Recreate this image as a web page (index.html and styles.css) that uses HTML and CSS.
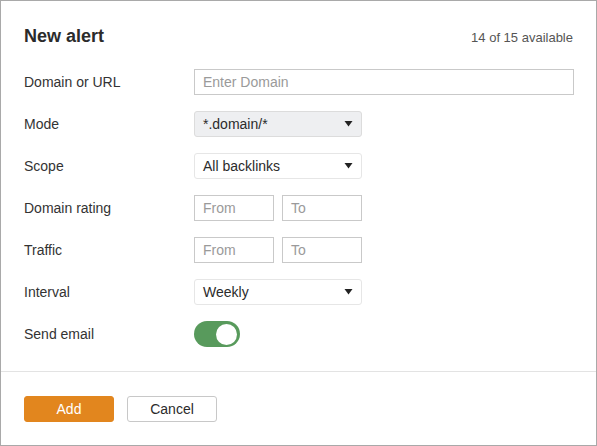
FILE: index.html
```html
<!DOCTYPE html>
<html>
<head>
<meta charset="utf-8">
<link rel="stylesheet" href="styles.css">
</head>
<body>
<div class="dialog">
  <div class="main">
    <div class="header">
      <h1 class="title">New alert</h1>
      <span class="count">14 of 15 available</span>
    </div>
    <div class="form">
      <div class="label">Domain or URL</div>
      <div class="field"><div class="input wide placeholder">Enter Domain</div></div>

      <div class="label">Mode</div>
      <div class="field"><div class="select filled"><span>*.domain/*</span><svg class="caret" width="9" height="6" viewBox="0 0 9 6"><polygon points="0.5,0 8.5,0 4.5,5.5" fill="#222"/></svg></div></div>

      <div class="label">Scope</div>
      <div class="field"><div class="select"><span>All backlinks</span><svg class="caret" width="9" height="6" viewBox="0 0 9 6"><polygon points="0.5,0 8.5,0 4.5,5.5" fill="#222"/></svg></div></div>

      <div class="label">Domain rating</div>
      <div class="field pair"><div class="input small placeholder">From</div><div class="input small placeholder">To</div></div>

      <div class="label">Traffic</div>
      <div class="field pair"><div class="input small placeholder">From</div><div class="input small placeholder">To</div></div>

      <div class="label">Interval</div>
      <div class="field"><div class="select"><span>Weekly</span><svg class="caret" width="9" height="6" viewBox="0 0 9 6"><polygon points="0.5,0 8.5,0 4.5,5.5" fill="#222"/></svg></div></div>

      <div class="label">Send email</div>
      <div class="field"><div class="toggle"><div class="knob"></div></div></div>
    </div>
  </div>
  <div class="footer">
    <button class="btn primary">Add</button>
    <button class="btn secondary">Cancel</button>
  </div>
</div>
</body>
</html>
```

FILE: styles.css
```css
* { box-sizing: border-box; }
html, body { margin: 0; padding: 0; background: #fff; }
body { font-family: "Liberation Sans", Arial, sans-serif; color: #333; }

.dialog {
  width: 597px;
  height: 446px;
  border: 1px solid #a9a9a9;
  display: flex;
  flex-direction: column;
}

.main {
  padding: 24px 23px 24px 23px;
  border-bottom: 1px solid #e3e3e3;
}

.header {
  display: flex;
  justify-content: space-between;
  align-items: baseline;
  height: 20px;
  padding-top: 1px;
}

.title {
  margin: 0;
  font-size: 18px;
  line-height: 20px;
  font-weight: bold;
  color: #2b2b2b;
}

.count {
  font-size: 13px;
  color: #555;
}

.form {
  margin-top: 24px;
  display: grid;
  grid-template-columns: 170px 1fr;
  grid-auto-rows: 26px;
  row-gap: 16px;
  align-items: center;
}

.label {
  font-size: 14px;
  color: #333;
  line-height: 26px;
}

.field { display: flex; align-items: center; height: 26px; }
.pair { gap: 8px; }

.input {
  height: 26px;
  border: 1px solid #c9c9c9;
  font-size: 14px;
  line-height: 24px;
  padding: 0 8px;
  background: #fff;
}
.input.wide { width: 380px; }
.input.small { width: 80px; }
.placeholder { color: #9a9a9a; }

.select {
  width: 168px;
  height: 26px;
  border: 1px solid #e6e6e6;
  border-radius: 3px;
  font-size: 14px;
  color: #2b2b2b;
  padding: 0 7px 0 8px;
  display: flex;
  align-items: center;
  justify-content: space-between;
  background: #fff;
}
.select.filled {
  background: #eeeff1;
  border-color: #dcdcdc;
}
.caret { display: block; margin-right: 1px; }

.toggle {
  width: 46px;
  height: 26px;
  border-radius: 13px;
  background: #589a5c;
  display: flex;
  align-items: center;
  justify-content: flex-end;
  padding-right: 3px;
}
.knob {
  width: 21px;
  height: 21px;
  border-radius: 50%;
  background: #fff;
}

.footer {
  padding: 24px 23px;
  display: flex;
  gap: 13px;
}

.btn {
  width: 90px;
  height: 26px;
  border-radius: 3px;
  font-family: "Liberation Sans", Arial, sans-serif;
  font-size: 14px;
  padding: 0;
  cursor: pointer;
}
.btn.primary {
  background: #e2861e;
  border: 1px solid #e2861e;
  color: #fff;
}
.btn.secondary {
  background: #fff;
  border: 1px solid #c8c8c8;
  color: #2b2b2b;
}
```
